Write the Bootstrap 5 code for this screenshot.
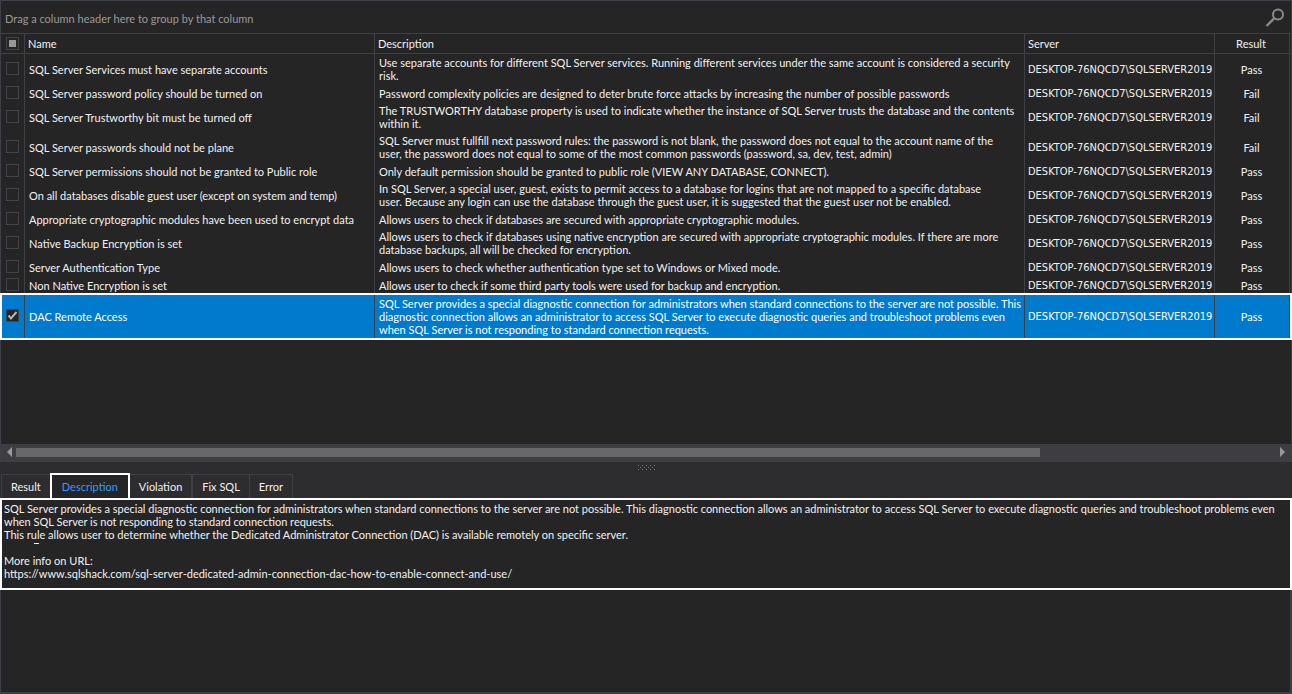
<!DOCTYPE html>
<html lang="en" data-bs-theme="dark">
<head>
<meta charset="utf-8">
<meta name="viewport" content="width=device-width, initial-scale=1">
<title>SQL Server rules</title>
<link href="https://cdn.jsdelivr.net/npm/bootstrap@5.3.0/dist/css/bootstrap.min.css" rel="stylesheet">
<style>
  :root { --line: #3f3f46; --panel: #252526; --chrome: #2d2d30; --accent: #007acc; }
  body { background: var(--chrome); color: #f1f1f1; font: 11px/13px Lato, Tahoma, sans-serif; }
  .grid-panel { background: var(--panel); border: 1px solid var(--line); border-bottom: 0; }
  .group-bar { height: 32px; padding: 2px 3px 0 4px; color: #999; }
  .search-btn { width: 26px; height: 26px; color: #8a8a8a; }
  .rules { table-layout: fixed; border-collapse: separate; border-spacing: 0; }
  .rules th, .rules td { height: 18px; padding: 2px 4px; border-right: 1px solid var(--line); vertical-align: middle; white-space: nowrap; }
  .rules th { height: 21px; padding: 1px 3px 2px; font-weight: 400; border-top: 1px solid var(--line); border-bottom: 1px solid var(--line); }
  .rules .col-check { width: 24px; padding: 0 5px; }
  .rules td.col-check { padding-bottom: 2px; }
  .rules .col-name { width: 350px; }
  .rules .col-server { width: 190px; padding-left: 3px; padding-right: 0; }
  .rules td.col-server { font-family: "DejaVu Sans Condensed", Tahoma, sans-serif; }
  .rules .col-result { width: 75px; padding-right: 5px; text-align: center; }
  .rules .col-rest { width: 1px; padding: 0; border-right: 0; }
  .rules .is-selected { background: var(--accent); color: #fff; outline: 2px solid #fff; outline-offset: -1px; }
  .rules .is-selected td { height: 45px; }
  .tick { appearance: none; display: block; width: 13px; height: 13px; margin: 0; border: 1px solid #434346; background: var(--panel) center / 11px 11px no-repeat; }
  .tick:checked { background-image: url("data:image/svg+xml,%3Csvg xmlns='http://www.w3.org/2000/svg' viewBox='0 0 11 11'%3E%3Cpath d='M1.5 5.5 4 8.5 9.5 2' fill='none' stroke='%23b5b5b5' stroke-width='2'/%3E%3C/svg%3E"); }
  .tick:indeterminate { background-image: linear-gradient(#999, #999); background-size: 7px 7px; }
  .scroll-bar { height: 18px; background: #3e3e42; padding: 0 5px 2px; }
  .scroll-bar button { color: #999; }
  .scroll-thumb { height: 9px; background: #686868; }
  .splitter { height: 11px; }
  .detail-tabs { padding-left: 1px; border: 0; }
  .detail-tabs .nav-link { height: 24px; padding: 4px 9px 5px; line-height: 13px; color: #f1f1f1; background: var(--chrome); border: 1px solid var(--line); border-bottom: 0; border-radius: 0; margin: 0; }
  .detail-tabs .nav-link.active { height: 25px; padding: 4px 10px 5px; color: #3399ff; background: var(--panel); border: 2px solid #fff; border-bottom: 0; }
  .detail-text { min-height: 92px; padding: 2px; background: var(--panel); border: 2px solid #fff; }
  .detail-rest { height: 104px; background: var(--panel); border: 2px solid var(--line); border-top: 0; border-left-width: 1px; }
  .stray-dash { width: 5px; height: 1px; margin: 2px 0 10px 30px; background: #f1f1f1; }
  .detail-text a { color: inherit; }
</style>
</head>
<body class="d-flex flex-column min-vh-100">
<main class="grid-panel flex-grow-1 d-flex flex-column">
  <div class="group-bar d-flex align-items-center justify-content-between">
    <span>Drag a column header here to group by that column</span>
    <button type="button" class="search-btn btn p-0 border-0 d-flex align-items-center justify-content-center" aria-label="Search">
      <svg width="20" height="20" viewBox="0 0 20 20" fill="none" stroke="currentColor" stroke-width="2"><circle cx="13" cy="6.5" r="5"/><path d="M9.5 10 1.5 18" stroke-width="2.4"/></svg>
    </button>
  </div>
  <div class="flex-grow-1">
    <table class="rules w-100">
      <thead><tr>
        <th class="col-check"><input class="tick" type="checkbox" id="all" aria-label="Select all"></th>
        <th class="col-name">Name</th><th>Description</th><th class="col-server">Server</th><th class="col-result">Result</th><th class="col-rest"></th>
      </tr></thead>
      <tbody>
        <tr><td class="col-check"><input class="tick" type="checkbox" id="r1"></td><td><label for="r1">SQL Server Services must have separate accounts</label></td><td>Use separate accounts for different SQL Server services. Running different services under the same account is considered a security<br>risk.</td><td class="col-server">DESKTOP-76NQCD7\SQLSERVER2019</td><td class="col-result">Pass</td></tr>
        <tr><td class="col-check"><input class="tick" type="checkbox" id="r2"></td><td><label for="r2">SQL Server password policy should be turned on</label></td><td>Password complexity policies are designed to deter brute force attacks by increasing the number of possible passwords</td><td class="col-server">DESKTOP-76NQCD7\SQLSERVER2019</td><td class="col-result">Fail</td></tr>
        <tr><td class="col-check"><input class="tick" type="checkbox" id="r3"></td><td><label for="r3">SQL Server Trustworthy bit must be turned off</label></td><td>The TRUSTWORTHY database property is used to indicate whether the instance of SQL Server trusts the database and the contents<br>within it.</td><td class="col-server">DESKTOP-76NQCD7\SQLSERVER2019</td><td class="col-result">Fail</td></tr>
        <tr><td class="col-check"><input class="tick" type="checkbox" id="r4"></td><td><label for="r4">SQL Server passwords should not be plane</label></td><td>SQL Server must fullfill next password rules: the password is not blank, the password does not equal to the account name of the<br>user, the password does not equal to some of the most common passwords (password, sa, dev, test, admin)</td><td class="col-server">DESKTOP-76NQCD7\SQLSERVER2019</td><td class="col-result">Fail</td></tr>
        <tr><td class="col-check"><input class="tick" type="checkbox" id="r5"></td><td><label for="r5">SQL Server permissions should not be granted to Public role</label></td><td>Only default permission should be granted to public role (VIEW ANY DATABASE, CONNECT).</td><td class="col-server">DESKTOP-76NQCD7\SQLSERVER2019</td><td class="col-result">Pass</td></tr>
        <tr><td class="col-check"><input class="tick" type="checkbox" id="r6"></td><td><label for="r6">On all databases disable guest user (except on system and temp)</label></td><td>In SQL Server, a special user, guest, exists to permit access to a database for logins that are not mapped to a specific database<br>user. Because any login can use the database through the guest user, it is suggested that the guest user not be enabled.</td><td class="col-server">DESKTOP-76NQCD7\SQLSERVER2019</td><td class="col-result">Pass</td></tr>
        <tr><td class="col-check"><input class="tick" type="checkbox" id="r7"></td><td><label for="r7">Appropriate cryptographic modules have been used to encrypt data</label></td><td>Allows users to check if databases are secured with appropriate cryptographic modules.</td><td class="col-server">DESKTOP-76NQCD7\SQLSERVER2019</td><td class="col-result">Pass</td></tr>
        <tr><td class="col-check"><input class="tick" type="checkbox" id="r8"></td><td><label for="r8">Native Backup Encryption is set</label></td><td>Allows users to check if databases using native encryption are secured with appropriate cryptographic modules. If there are more<br>database backups, all will be checked for encryption.</td><td class="col-server">DESKTOP-76NQCD7\SQLSERVER2019</td><td class="col-result">Pass</td></tr>
        <tr><td class="col-check"><input class="tick" type="checkbox" id="r9"></td><td><label for="r9">Server Authentication Type</label></td><td>Allows users to check whether authentication type set to Windows or Mixed mode.</td><td class="col-server">DESKTOP-76NQCD7\SQLSERVER2019</td><td class="col-result">Pass</td></tr>
        <tr><td class="col-check"><input class="tick" type="checkbox" id="r10"></td><td><label for="r10">Non Native Encryption is set</label></td><td>Allows user to check if some third party tools were used for backup and encryption.</td><td class="col-server">DESKTOP-76NQCD7\SQLSERVER2019</td><td class="col-result">Pass</td></tr>
        <tr class="is-selected"><td class="col-check"><input class="tick" type="checkbox" id="r11" checked></td><td><label for="r11">DAC Remote Access</label></td><td>SQL Server provides a special diagnostic connection for administrators when standard connections to the server are not possible. This<br>diagnostic connection allows an administrator to access SQL Server to execute diagnostic queries and troubleshoot problems even<br>when SQL Server is not responding to standard connection requests.</td><td class="col-server">DESKTOP-76NQCD7\SQLSERVER2019</td><td class="col-result">Pass</td></tr>
      </tbody>
    </table>
  </div>
  <div class="scroll-bar d-flex align-items-center">
    <button type="button" class="btn p-0 border-0 d-flex" aria-label="Scroll left"><svg width="6" height="10" viewBox="0 0 6 10"><path d="M6 0v10L1 5z" fill="currentColor"/></svg></button>
    <div class="flex-grow-1 ms-1"><div class="scroll-thumb" style="width:81%"></div></div>
    <button type="button" class="btn p-0 border-0 d-flex" aria-label="Scroll right"><svg width="6" height="10" viewBox="0 0 6 10"><path d="M0 0v10l5-5z" fill="currentColor"/></svg></button>
  </div>
</main>
<div class="splitter d-flex justify-content-center align-items-center" role="separator">
  <svg width="17" height="5" viewBox="0 0 17 5" fill="#77777a"><path d="M0 0h1v1H0zM4 0h1v1H4zM8 0h1v1H8zM12 0h1v1h-1zM16 0h1v1h-1zM2 2h1v1H2zM6 2h1v1H6zM10 2h1v1h-1zM14 2h1v1h-1zM0 4h1v1H0zM4 4h1v1H4zM8 4h1v1H8zM12 4h1v1h-1zM16 4h1v1h-1z"/></svg>
</div>
<section>
  <div class="detail-tabs nav nav-tabs flex-nowrap align-items-end" role="tablist">
    <button type="button" class="nav-link border-end-0" role="tab">Result</button>
    <button type="button" class="nav-link active" role="tab" aria-selected="true">Description</button>
    <button type="button" class="nav-link border-start-0" role="tab">Violation</button>
    <button type="button" class="nav-link" role="tab">Fix SQL</button>
    <button type="button" class="nav-link border-start-0" role="tab">Error</button>
  </div>
  <div class="detail-text" role="tabpanel">
    SQL Server provides a special diagnostic connection for administrators when standard connections to the server are not possible. This diagnostic connection allows an administrator to access SQL Server to execute diagnostic queries and troubleshoot problems even when SQL Server is not responding to standard connection requests.<br>This rule allows user to determine whether the Dedicated Administrator Connection (DAC) is available remotely on specific server.
    <div class="stray-dash"></div>
    More info on URL:<br>
    <a class="text-decoration-none" href="https://www.sqlshack.com/sql-server-dedicated-admin-connection-dac-how-to-enable-connect-and-use/">https://www.sqlshack.com/sql-server-dedicated-admin-connection-dac-how-to-enable-connect-and-use/</a>
  </div>
  <div class="detail-rest"></div>
</section>
<script src="https://cdn.jsdelivr.net/npm/bootstrap@5.3.0/dist/js/bootstrap.bundle.min.js"></script>
<script>document.getElementById('all').indeterminate = true;</script>
</body>
</html>
